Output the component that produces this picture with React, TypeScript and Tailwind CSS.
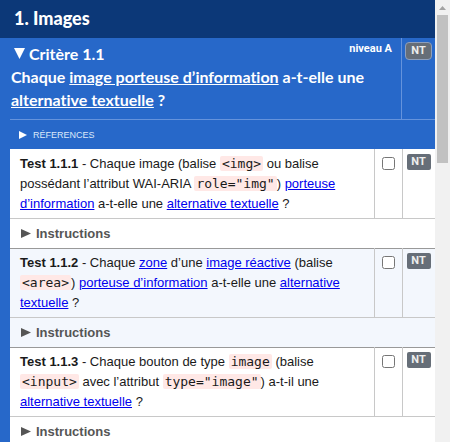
import { Fragment, useState, type ReactNode } from "react";

function Triangle({ className, down = false }: { className: string; down?: boolean }) {
  return (
    <svg viewBox="0 0 10 10" preserveAspectRatio="none" className={className} fill="currentColor" aria-hidden="true">
      <path d={down ? "M0 0H10L5 10Z" : "M0 0L10 5L0 10Z"} />
    </svg>
  );
}

function Term({ children }: { children: ReactNode }) {
  return (
    <a href="#glossaire" className="text-[#0000ee] underline">
      {children}
    </a>
  );
}

function Code({ children }: { children: ReactNode }) {
  return (
    <code className="rounded-xs bg-[#ffe8e6] px-0.5 font-['DejaVu_Sans_Mono',monospace] text-[13px]">{children}</code>
  );
}

function Status({ outlined = false }: { outlined?: boolean }) {
  return (
    <button
      type="button"
      className={
        outlined
          ? "block h-[18px] w-[27px] rounded-sm border border-[#8d9fbd] bg-[#666e78] font-['Roboto',sans-serif] text-[11px] leading-4 font-bold text-[#eeeeee]"
          : "block h-4 w-6 rounded-xs bg-[#666e78] font-['Roboto',sans-serif] text-[11px] leading-4 font-bold text-[#eeeeee]"
      }
    >
      NT
    </button>
  );
}

const tests: { id: string; body: ReactNode }[] = [
  {
    id: "1.1.1",
    body: (
      <>
        Chaque image (balise <Code>&lt;img&gt;</Code> ou balise possédant l’attribut WAI-ARIA{" "}
        <Code>role="img"</Code>) <Term>porteuse d’information</Term> a-t-elle une <Term>alternative textuelle</Term> ?
      </>
    ),
  },
  {
    id: "1.1.2",
    body: (
      <>
        Chaque <Term>zone</Term> d’une <Term>image réactive</Term> (balise <Code>&lt;area&gt;</Code>){" "}
        <Term>porteuse d’information</Term> a-t-elle une <Term>alternative textuelle</Term> ?
      </>
    ),
  },
  {
    id: "1.1.3",
    body: (
      <>
        Chaque bouton de type <Code>image</Code> (balise <Code>&lt;input&gt;</Code> avec l’attribut{" "}
        <Code>type="image"</Code>) a-t-il une <Term>alternative textuelle</Term> ?
      </>
    ),
  },
];

export default function App() {
  const [done, setDone] = useState<Record<string, boolean>>({});

  return (
    <div className="flex h-screen overflow-hidden bg-white font-['Liberation_Sans',Arial,sans-serif] text-[13px] leading-5 text-[#1a1a1a]">
      <main className="min-w-0 flex-1 bg-[#2768c9]">
        <h1 className="bg-[#0c3878] px-3.5 pt-1.5 pb-2 font-['Lato',sans-serif] text-lg leading-6 font-black text-white">
          1. Images
        </h1>

        <section className="pl-2.5">
          <header className="flex border-b border-[#6593dc] text-white">
            <div className="min-w-0 flex-1 pt-1 pb-2 pl-px font-['Lato',sans-serif] text-base leading-[23px] font-bold [font-variant-ligatures:none]">
              <div className="flex items-start justify-between pr-[9px]">
                <h2 className="flex items-center gap-1 pl-[3px]">
                  <Triangle down className="h-[11px] w-[11px]" />
                  Critère 1.1
                </h2>
                <span className="font-['Roboto',sans-serif] text-[11px] leading-3.5 font-bold">niveau A</span>
              </div>
              <p>
                Chaque{" "}
                <a href="#glossaire" className="underline">
                  image porteuse d’information
                </a>{" "}
                a-t-elle une{" "}
                <a href="#glossaire" className="underline">
                  alternative textuelle
                </a>{" "}
                ?
              </p>
            </div>
            <div className="w-[34px] border-l border-[#6593dc] pt-1 pl-[3px]">
              <Status outlined />
            </div>
          </header>

          <button type="button" className="flex h-[29px] w-full items-center gap-1.5 pl-[9px] text-[9px] text-[#dce8fa]">
            <Triangle className="size-2 text-white" />
            RÉFERENCES
          </button>

          <table className="w-full table-fixed border-collapse border-t border-white bg-white">
            <colgroup>
              <col />
              <col className="w-7" />
              <col className="w-[33px]" />
            </colgroup>
            <tbody>
              {tests.map(({ id, body }) => (
                <Fragment key={id}>
                  <tr className="border-b border-[#c8c8c8] align-top nth-[4n+3]:bg-[#f3f7fd]">
                    <td className="py-1 pr-5 pl-2.5">
                      <strong>{`Test ${id}`}</strong> - {body}
                    </td>
                    <td className="border-l border-[#c8c8c8] pt-[7px] pl-[7px]">
                      <input
                        type="checkbox"
                        aria-label={`Test ${id}`}
                        checked={!!done[id]}
                        onChange={(e) => setDone({ ...done, [id]: e.target.checked })}
                        className="block size-[13px]"
                      />
                    </td>
                    <td className="border-l border-[#c8c8c8] pt-1 pl-1">
                      <Status />
                    </td>
                  </tr>
                  <tr className="border-b border-[#999999] nth-[4n]:bg-[#f3f7fd]">
                    <td colSpan={3} className="h-[30px] pl-[11px]">
                      <button type="button" className="flex items-center gap-[5px] font-bold text-[#555555]">
                        <Triangle className="h-[9px] w-2.5" />
                        Instructions
                      </button>
                    </td>
                  </tr>
                </Fragment>
              ))}
            </tbody>
          </table>
        </section>
      </main>

      <div className="flex w-[15px] shrink-0 flex-col items-center bg-[#f1f1f1] pt-1.5" aria-hidden="true">
        <svg viewBox="0 0 7 4" className="h-1 w-[7px] fill-[#a3a3a3]">
          <path d="M3.5 0L7 4H0Z" />
        </svg>
        <div className="mt-[5px] h-37 w-[11px] bg-[#c1c1c1]" />
      </div>
    </div>
  );
}
